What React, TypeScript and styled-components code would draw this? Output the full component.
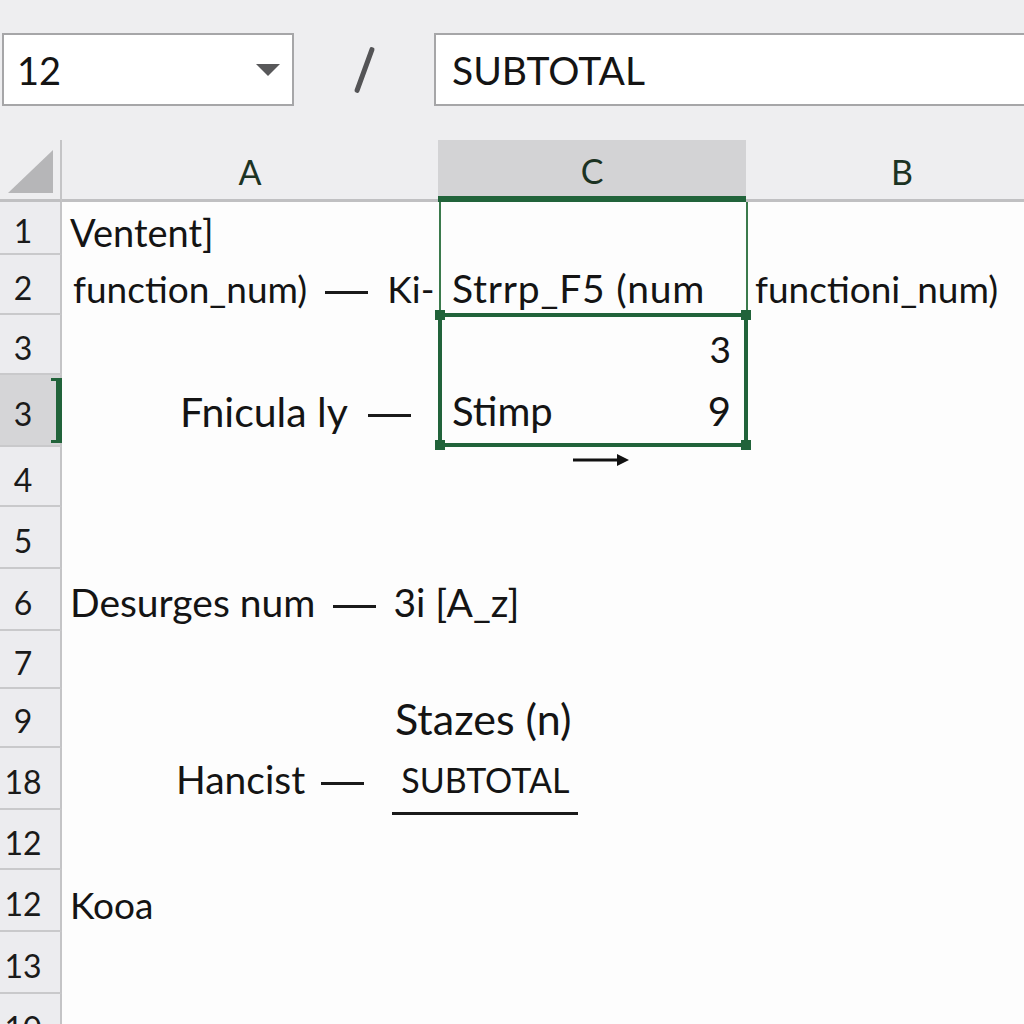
import React from "react";
import styled, { createGlobalStyle } from "styled-components";

const GREEN = "#21633a";
const TRACE = "#3b7a4c";

const GlobalStyle = createGlobalStyle`
  html, body {
    margin: 0;
    padding: 0;
    background: #fdfdfd;
  }
  body {
    font-family: Lato, "Liberation Sans", sans-serif;
    color: #141414;
  }
`;

const Screen = styled.div`
  width: 1024px;
  height: 1024px;
  overflow: hidden;
  background: #fdfdfd;
  display: flex;
  flex-direction: column;
`;

const TopBar = styled.div`
  height: 140px;
  flex: none;
  box-sizing: border-box;
  padding-top: 33px;
  background: #eeeef0;
  display: flex;
  align-items: flex-start;
`;

const NameBox = styled.div`
  margin-left: 2px;
  width: 292px;
  height: 73px;
  box-sizing: border-box;
  padding: 0 12px 0 13px;
  background: #fff;
  border: 2px solid #a6a6a8;
  display: flex;
  align-items: center;
  justify-content: space-between;
  font-size: 38px;
`;

const Caret = styled.span`
  width: 0;
  height: 0;
  border-left: 12px solid transparent;
  border-right: 12px solid transparent;
  border-top: 12px solid #58585a;
`;

const FxArea = styled.div`
  width: 140px;
  height: 73px;
  flex: none;
  display: flex;
  align-items: center;
  justify-content: center;
`;

const FxSlash = styled.span`
  width: 5px;
  height: 48px;
  border-radius: 2px;
  background: #545456;
  transform: rotate(20deg);
`;

const FormulaBox = styled.div`
  flex: 1;
  height: 73px;
  box-sizing: border-box;
  padding-left: 16px;
  background: #fff;
  border: 2px solid #a6a6a8;
  border-right: none;
  display: flex;
  align-items: center;
  font-size: 39px;
`;

const HeaderRow = styled.div`
  height: 62px;
  flex: none;
  display: flex;
  background: #eeeef0;
`;

const Corner = styled.div`
  width: 62px;
  flex: none;
  box-sizing: border-box;
  padding: 0 7px 6px 0;
  border-right: 2px solid #c4c4c6;
  border-bottom: 3px solid #c0c0c2;
  display: flex;
  align-items: flex-end;
  justify-content: flex-end;
`;

const CornerMark = styled.span`
  width: 45px;
  height: 43px;
  background: #b6b6b8;
  clip-path: polygon(100% 0, 100% 100%, 0 100%);
`;

const ColHead = styled.div<{ $w: number; $active?: boolean }>`
  width: ${(p) => p.$w}px;
  flex: none;
  box-sizing: border-box;
  padding-top: 4px;
  background: ${(p) => (p.$active ? "#d3d3d5" : "transparent")};
  border-bottom: ${(p) => (p.$active ? `6px solid ${GREEN}` : "3px solid #c0c0c2")};
  display: flex;
  align-items: center;
  justify-content: center;
  font-size: 34px;
  color: #1c3323;
`;

const Sheet = styled.div`
  position: relative;
  flex: 1;
  display: flex;
  flex-direction: column;
`;

const Row = styled.div<{ $h: number }>`
  height: ${(p) => p.$h}px;
  flex: none;
  display: flex;
`;

const RowHead = styled.div<{ $active?: boolean }>`
  position: relative;
  width: 62px;
  flex: none;
  box-sizing: border-box;
  padding: 6px 14px 0 0;
  background: ${(p) => (p.$active ? "#d5d5d7" : "#ececef")};
  border-right: 2px solid #c4c4c6;
  border-bottom: 2px solid #c9c9cb;
  display: flex;
  align-items: center;
  justify-content: center;
  font-size: 32px;
  color: #1a1a1a;

  ${(p) =>
    p.$active &&
    `
    &::after {
      content: "";
      position: absolute;
      right: -2px;
      top: 3px;
      bottom: 2px;
      width: 5px;
      border: 3px solid ${GREEN};
      border-left: none;
      border-right-width: 6px;
    }
  `}
`;

type Align = "start" | "end" | "between";

const Cell = styled.div<{
  $w: number;
  $indent?: number;
  $align?: Align;
  $top?: number;
  $size?: number;
  $spacing?: number;
}>`
  width: ${(p) => p.$w}px;
  flex: none;
  box-sizing: border-box;
  padding: ${(p) => p.$top ?? 6}px 15px 0 ${(p) => p.$indent ?? 0}px;
  display: flex;
  align-items: center;
  justify-content: ${(p) =>
    p.$align === "end" ? "flex-end" : p.$align === "between" ? "space-between" : "flex-start"};
  white-space: nowrap;
  font-size: ${(p) => p.$size ?? 37}px;
  letter-spacing: ${(p) => p.$spacing ?? 0}px;
  color: #141414;
`;

const Dash = styled.span<{ $before: number; $after?: number }>`
  flex: none;
  width: 43px;
  height: 3px;
  margin: 9px ${(p) => p.$after ?? 0}px 0 ${(p) => p.$before}px;
  background: #1a1a1a;
`;

const Underlined = styled.span<{ $before: number }>`
  position: relative;
  flex: none;
  margin-left: ${(p) => p.$before}px;
  padding: 0 9px;
  font-size: 34px;

  &::after {
    content: "";
    position: absolute;
    left: 0;
    right: 0;
    bottom: -15px;
    height: 3px;
    background: #1a1a1a;
  }
`;

const ColumnTrace = styled.div`
  position: absolute;
  left: 439px;
  top: 0;
  width: 309px;
  height: 113px;
  box-sizing: border-box;
  border-left: 2px solid ${TRACE};
  border-right: 2px solid ${TRACE};
  pointer-events: none;
`;

const RangeBox = styled.div`
  position: absolute;
  left: 438px;
  top: 111px;
  width: 310px;
  height: 134px;
  box-sizing: border-box;
  border: 4px solid ${GREEN};
  pointer-events: none;
`;

const Handle = styled.span<{ $x: "left" | "right"; $y: "top" | "bottom" }>`
  position: absolute;
  ${(p) => p.$x}: -7px;
  ${(p) => p.$y}: -7px;
  width: 10px;
  height: 10px;
  background: ${GREEN};
`;

const ArrowWrap = styled.span`
  align-self: flex-start;
  margin-top: 1px;
  display: flex;
`;

const Arrow = () => (
  <ArrowWrap>
    <svg width="56" height="12" viewBox="0 0 56 12">
      <line x1="0" y1="6" x2="46" y2="6" stroke="#111" strokeWidth="3" />
      <polygon points="44,0 56,6 44,12" fill="#111" />
    </svg>
  </ArrowWrap>
);

const A = 376;
const C = 308;
const B = 312;

const App: React.FC = () => {
  return (
    <>
      <GlobalStyle />
      <Screen>
        <TopBar>
          <NameBox>
            <span>12</span>
            <Caret />
          </NameBox>
          <FxArea>
            <FxSlash />
          </FxArea>
          <FormulaBox>SUBTOTAL</FormulaBox>
        </TopBar>

        <HeaderRow>
          <Corner>
            <CornerMark />
          </Corner>
          <ColHead $w={A}>A</ColHead>
          <ColHead $w={C} $active>
            C
          </ColHead>
          <ColHead $w={B}>B</ColHead>
        </HeaderRow>

        <Sheet>
          <Row $h={53}>
            <RowHead>1</RowHead>
            <Cell $w={A} $indent={8} $size={38}>
              Ventent]
            </Cell>
          </Row>
          <Row $h={60}>
            <RowHead>2</RowHead>
            <Cell $w={A} $indent={11}>
              function_num)
              <Dash $before={18} $after={19} />
              Ki-
            </Cell>
            <Cell $w={C} $indent={14} $size={39} $spacing={0.8}>
              Strrp_F5 (num
            </Cell>
            <Cell $w={B} $indent={9}>
              functioni_num)
            </Cell>
          </Row>
          <Row $h={60}>
            <RowHead>3</RowHead>
            <Cell $w={A} />
            <Cell $w={C} $align="end">
              3
            </Cell>
          </Row>
          <Row $h={72}>
            <RowHead $active>3</RowHead>
            <Cell $w={A} $indent={118} $size={41} $top={0}>
              Fnicula ly
              <Dash $before={20} />
            </Cell>
            <Cell $w={C} $indent={14} $size={40} $align="between" $top={0}>
              <span>Stimp</span>
              <span>9</span>
            </Cell>
          </Row>
          <Row $h={60}>
            <RowHead>4</RowHead>
            <Cell $w={A} />
            <Cell $w={C} $indent={135}>
              <Arrow />
            </Cell>
          </Row>
          <Row $h={62}>
            <RowHead>5</RowHead>
          </Row>
          <Row $h={62}>
            <RowHead>6</RowHead>
            <Cell $w={A} $indent={8} $size={39} $top={3}>
              Desurges num
              <Dash $before={18} $after={17} />
              3i [A_z]
            </Cell>
          </Row>
          <Row $h={58}>
            <RowHead>7</RowHead>
          </Row>
          <Row $h={59}>
            <RowHead>9</RowHead>
            <Cell $w={A} $indent={333} $size={43} $top={0}>
              Stazes (n)
            </Cell>
          </Row>
          <Row $h={62}>
            <RowHead>18</RowHead>
            <Cell $w={A} $indent={114} $size={39} $top={0}>
              Hancist
              <Dash $before={16} />
              <Underlined $before={28}>SUBTOTAL</Underlined>
            </Cell>
          </Row>
          <Row $h={60}>
            <RowHead>12</RowHead>
          </Row>
          <Row $h={62}>
            <RowHead>12</RowHead>
            <Cell $w={A} $indent={8}>
              Kooa
            </Cell>
          </Row>
          <Row $h={62}>
            <RowHead>13</RowHead>
          </Row>
          <Row $h={62}>
            <RowHead>10</RowHead>
          </Row>

          <ColumnTrace />
          <RangeBox>
            <Handle $x="left" $y="top" />
            <Handle $x="right" $y="top" />
            <Handle $x="left" $y="bottom" />
            <Handle $x="right" $y="bottom" />
          </RangeBox>
        </Sheet>
      </Screen>
    </>
  );
};

export default App;
